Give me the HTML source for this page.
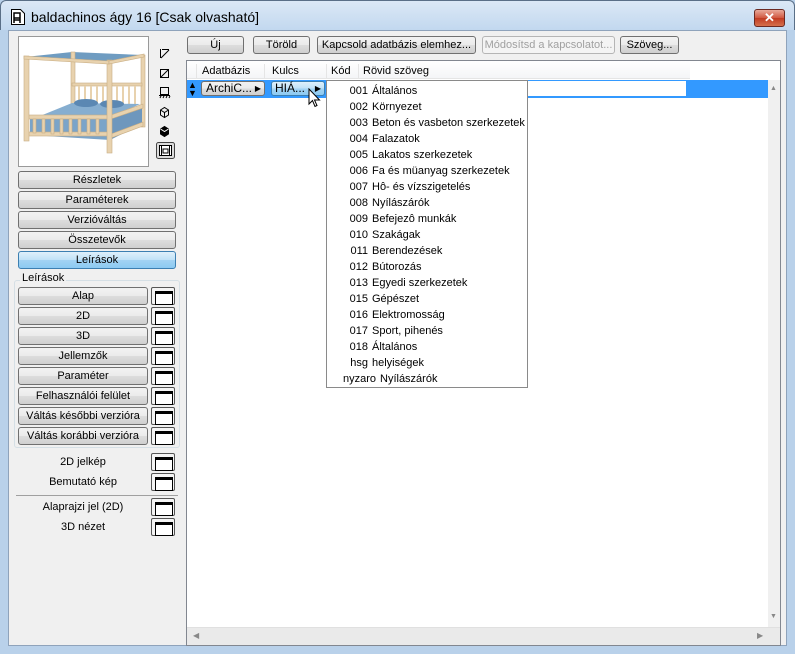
<!DOCTYPE html>
<html><head><meta charset="utf-8"><style>
*{box-sizing:border-box;margin:0;padding:0}
body{width:795px;height:654px;overflow:hidden;background:#b9d1ea;font-family:"Liberation Sans",Tahoma,sans-serif;font-size:11px;color:#000;position:relative}
.a{position:absolute}
.title{left:0;top:0;width:795px;height:30px;background:linear-gradient(#dbe8f6,#c2d8ef);border:1px solid #5a6f87;border-bottom:none;border-radius:6px 6px 0 0}
.client{left:8px;top:30px;width:779px;height:616px;background:#f0f0f0;border:1px solid #8fa3bb}
.btn{position:absolute;border:1px solid #707070;border-radius:3px;background:linear-gradient(#f2f2f2 0,#ebebeb 50%,#dddddd 51%,#cfcfcf 100%);text-align:center;font-size:11px;line-height:16px}
.blue{background:linear-gradient(#dff0fb,#bfe1f7 50%,#a3d3f3 51%,#8ccaf2);border-color:#3c7fb1}
.ico{position:absolute;width:24px;height:18px;border:1px solid #555;border-radius:2px;background:#f4f4f4}
.ico:after{content:"";position:absolute;left:3px;top:3px;width:16px;height:10px;border:1px solid #000;border-top:3px solid #000;background:#fff}
.lbl{position:absolute;text-align:center;width:130px;left:18px}
.dd div{height:16px;line-height:16px;white-space:nowrap;font-size:11px}
.dd b{display:inline-block;width:41px;text-align:right;font-weight:normal;margin-right:4px}
</style></head><body>
<div class="a title"></div>
<svg class="a" style="left:10px;top:8px" width="16" height="18" viewBox="0 0 16 18"><path d="M1.5 1.5h9l4 4v11h-13z" fill="#fff" stroke="#000"/><path d="M4 5h6v5H4z M4 10v5 M10 10v5 M4 12h6" fill="none" stroke="#000" stroke-width="1.5"/></svg>
<div class="a" style="left:31px;top:9px;font-size:14px;font-family:'Liberation Sans',sans-serif">baldachinos ágy 16 [Csak olvasható]</div>
<div class="a" style="left:754px;top:9px;width:31px;height:18px;border:1px solid #6b2a22;border-radius:3px;background:linear-gradient(#e9a99a,#d0573f 50%,#c13b22 51%,#d5704c);color:#fff;text-align:center;font-weight:bold;font-size:13px;line-height:16px">✕</div>
<div class="a client"></div>

<div class="a" style="left:18px;top:36px;width:131px;height:131px;background:#fff;border:1px solid #999">
<svg width="129" height="129" viewBox="19 37 129 129">
<g fill="#e8d2ae" stroke="#c9ae84" stroke-width=".6">
<polygon points="25,57 72,52 143,55 110,63" fill="#6f9cc1" stroke="none"/>
<rect x="71" y="52" width="4" height="52"/>
<rect x="141" y="55" width="4" height="72"/>
<rect x="72" y="83" width="70" height="3"/>
</g>
<g fill="#e8d2ae">
<rect x="78" y="86" width="2" height="18"/><rect x="84" y="86" width="2" height="18"/><rect x="90" y="86" width="2" height="18"/><rect x="96" y="86" width="2" height="18"/><rect x="102" y="86" width="2" height="18"/><rect x="116" y="86" width="2" height="18"/><rect x="122" y="86" width="2" height="18"/><rect x="128" y="86" width="2" height="18"/><rect x="134" y="86" width="2" height="18"/>
</g>
<polygon points="40,116 72,103 140,104 112,117" fill="#86aed0"/>
<ellipse cx="86" cy="103" rx="12" ry="4" fill="#5b88b3"/><ellipse cx="112" cy="104" rx="12" ry="4" fill="#5b88b3"/>
<polygon points="30,117 110,119 110,140 30,135" fill="#7aa4c9"/>
<polygon points="110,119 142,108 142,124 110,140" fill="#6e97bd"/>
<g fill="#e8d2ae" stroke="#c9ae84" stroke-width=".6">
<rect x="25" y="115" width="86" height="4"/>
<rect x="25" y="132" width="86" height="4"/>
<polygon points="111,115 143,104 143,108 111,119"/>
<polygon points="111,134 143,122 143,126 111,138"/>
<rect x="33" y="119" width="3" height="14"/><rect x="42" y="119" width="3" height="14"/><rect x="51" y="119" width="3" height="15"/><rect x="60" y="119" width="3" height="15"/><rect x="69" y="119" width="3" height="15"/><rect x="78" y="119" width="3" height="15"/><rect x="87" y="119" width="3" height="15"/><rect x="96" y="119" width="3" height="15"/>
<rect x="24" y="56" width="5" height="85"/>
<rect x="107" y="60" width="5" height="93"/>
<polygon points="24,56 109,61 109,64 24,59"/>
<polygon points="109,61 144,54 144,57 109,64"/>
</g>
</svg></div>

<svg class="a" style="left:156px;top:46px" width="20" height="116" viewBox="0 0 20 116" fill="none" stroke="#000">
<path d="M4.5 3v9 M5 12l8-8 M6 3.5h7"/>
<rect x="4.5" y="23.5" width="8" height="8"/><path d="M5 31l7-7"/>
<rect x="4.5" y="41.5" width="8" height="7"/><path d="M3 49.5h11 M4 52l1-2 M7 52l1-2 M10 52l1-2 M13 52l1-2"/>
<path d="M4.5 64l4-2.5 4 2.5v5l-4 2.5-4-2.5z M4.5 64l4 2.5 4-2.5 M8.5 66.5v5"/>
<path d="M4.5 83l4-2.5 4 2.5v5l-4 2.5-4-2.5z" fill="#000"/><path d="M4.5 83l4 2.5 4-2.5" stroke="#fff"/>
<rect x="0.5" y="96.5" width="18" height="16" rx="2" fill="#dcdcdc" stroke="#444"/>
<rect x="3.5" y="99.5" width="12" height="10" fill="#fff"/><path d="M5.5 100v9 M13.5 100v9 M7 103h5v4H7z"/>
</svg>

<div class="btn" style="left:18px;top:171px;width:158px;height:18px">Részletek</div>
<div class="btn" style="left:18px;top:191px;width:158px;height:18px">Paraméterek</div>
<div class="btn" style="left:18px;top:211px;width:158px;height:18px">Verzióváltás</div>
<div class="btn" style="left:18px;top:231px;width:158px;height:18px">Összetevők</div>
<div class="btn blue" style="left:18px;top:251px;width:158px;height:18px">Leírások</div>

<div class="a" style="left:14px;top:280px;width:166px;height:168px;border:1px solid #d5dfe5;border-radius:3px"></div>
<div class="a" style="left:20px;top:272px;background:#f0f0f0;padding:0 2px">Leírások</div>

<div class="btn" style="left:18px;top:287px;width:130px;height:18px">Alap</div><div class="ico" style="left:151px;top:287px"></div>
<div class="btn" style="left:18px;top:307px;width:130px;height:18px">2D</div><div class="ico" style="left:151px;top:307px"></div>
<div class="btn" style="left:18px;top:327px;width:130px;height:18px">3D</div><div class="ico" style="left:151px;top:327px"></div>
<div class="btn" style="left:18px;top:347px;width:130px;height:18px">Jellemzők</div><div class="ico" style="left:151px;top:347px"></div>
<div class="btn" style="left:18px;top:367px;width:130px;height:18px">Paraméter</div><div class="ico" style="left:151px;top:367px"></div>
<div class="btn" style="left:18px;top:387px;width:130px;height:18px">Felhasználói felület</div><div class="ico" style="left:151px;top:387px"></div>
<div class="btn" style="left:18px;top:407px;width:130px;height:18px">Váltás későbbi verzióra</div><div class="ico" style="left:151px;top:407px"></div>
<div class="btn" style="left:18px;top:427px;width:130px;height:18px">Váltás korábbi verzióra</div><div class="ico" style="left:151px;top:427px"></div>

<div class="lbl" style="top:456px">2D jelkép</div><div class="ico" style="left:151px;top:453px"></div>
<div class="lbl" style="top:476px">Bemutató kép</div><div class="ico" style="left:151px;top:473px"></div>
<div class="a" style="left:16px;top:495px;width:162px;height:1px;background:#a0a0a0"></div>
<div class="lbl" style="top:501px">Alaprajzi jel (2D)</div><div class="ico" style="left:151px;top:498px"></div>
<div class="lbl" style="top:521px">3D nézet</div><div class="ico" style="left:151px;top:518px"></div>

<div class="btn" style="left:187px;top:36px;width:57px;height:18px">Új</div>
<div class="btn" style="left:253px;top:36px;width:57px;height:18px">Töröld</div>
<div class="btn" style="left:317px;top:36px;width:159px;height:18px">Kapcsold adatbázis elemhez...</div>
<div class="btn" style="left:482px;top:36px;width:133px;height:18px;color:#a0a0a0;border-color:#b5b5b5;background:#f4f4f4">Módosítsd a kapcsolatot...</div>
<div class="btn" style="left:620px;top:36px;width:59px;height:18px">Szöveg...</div>

<div class="a" style="left:186px;top:60px;width:595px;height:586px;background:#fff;border:1px solid #828790"></div>
<div class="a" style="left:187px;top:61px;width:503px;height:18px;background:linear-gradient(#fff,#f4f5f7);border-bottom:1px solid #e5e5e5"></div>
<div class="a" style="left:196px;top:64px;width:1px;height:14px;background:#e5e5e5"></div>
<div class="a" style="left:264px;top:64px;width:1px;height:14px;background:#e5e5e5"></div>
<div class="a" style="left:326px;top:64px;width:1px;height:14px;background:#e5e5e5"></div>
<div class="a" style="left:358px;top:64px;width:1px;height:14px;background:#e5e5e5"></div>
<div class="a" style="left:202px;top:65px">Adatbázis</div>
<div class="a" style="left:272px;top:65px">Kulcs</div>
<div class="a" style="left:331px;top:65px">Kód</div>
<div class="a" style="left:363px;top:65px">Rövid szöveg</div>

<div class="a" style="left:187px;top:80px;width:581px;height:18px;background:#3399ff"></div>
<div class="a" style="left:188px;top:81px;color:#000;font-size:9px;line-height:8px">▲<br>▼</div>
<div class="a" style="left:527px;top:81px;width:159px;height:15px;background:#fff"></div>
<div class="btn" style="left:201px;top:81px;width:64px;height:15px;line-height:13px;text-align:left;padding-left:4px;font-size:12px">ArchiC... <span style="font-size:8px;position:absolute;right:3px">▶</span></div>
<div class="btn blue" style="left:271px;top:81px;width:54px;height:15px;line-height:13px;text-align:left;padding-left:3px;font-size:12px">HIÁ... <span style="font-size:8px;position:absolute;right:3px">▶</span></div>
<svg class="a" style="left:308px;top:88px" width="13" height="20" viewBox="0 0 13 20"><path d="M1 1v15l3.5-3.5 2.5 6 2-1-2.5-5.5h5z" fill="#fff" stroke="#000"/></svg>

<div class="a dd" style="left:326px;top:80px;width:202px;height:308px;background:#fff;border:1px solid #8a8a8a;padding-top:2px">
<div><b>001</b>Általános</div><div><b>002</b>Környezet</div><div><b>003</b>Beton és vasbeton szerkezetek</div><div><b>004</b>Falazatok</div><div><b>005</b>Lakatos szerkezetek</div><div><b>006</b>Fa és müanyag szerkezetek</div><div><b>007</b>Hô- és vízszigetelés</div><div><b>008</b>Nyílászárók</div><div><b>009</b>Befejezô munkák</div><div><b>010</b>Szakágak</div><div><b>011</b>Berendezések</div><div><b>012</b>Bútorozás</div><div><b>013</b>Egyedi szerkezetek</div><div><b>015</b>Gépészet</div><div><b>016</b>Elektromosság</div><div><b>017</b>Sport, pihenés</div><div><b>018</b>Általános</div><div><b>hsg</b>helyiségek</div><div><b style="width:49px">nyzaro</b>Nyílászárók</div>
</div>

<div class="a" style="left:768px;top:80px;width:12px;height:547px;background:#f0f0f0"></div>
<div class="a" style="left:770px;top:85px;color:#888;font-size:7px">▲</div>
<div class="a" style="left:770px;top:613px;color:#888;font-size:7px">▼</div>
<div class="a" style="left:187px;top:627px;width:593px;height:18px;background:#eaeaea;border-top:1px solid #e0e0e0"></div>
<div class="a" style="left:193px;top:631px;color:#888;font-size:8px">◀</div>
<div class="a" style="left:757px;top:631px;color:#888;font-size:8px">▶</div>
</body></html>
